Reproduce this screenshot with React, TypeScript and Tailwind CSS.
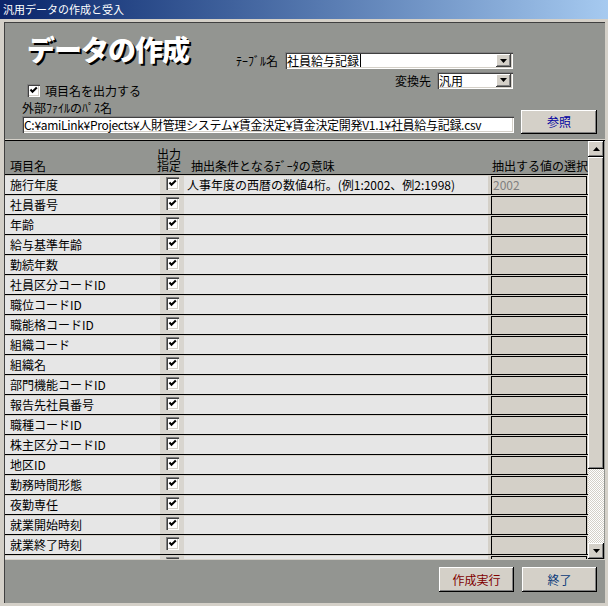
import React from 'react';

const rows = [
  '施行年度',
  '社員番号',
  '年齢',
  '給与基準年齢',
  '勤続年数',
  '社員区分コードID',
  '職位コードID',
  '職能格コードID',
  '組織コード',
  '組織名',
  '部門機能コードID',
  '報告先社員番号',
  '職種コードID',
  '株主区分コードID',
  '地区ID',
  '勤務時間形態',
  '夜勤専任',
  '就業開始時刻',
  '就業終了時刻',
  '',
];

function Check() {
  return (
    <span className="relative block h-[13px] w-[13px] bg-white shadow-[inset_1px_1px_0_#808080,inset_2px_2px_0_#404040,inset_-1px_-1px_0_#fff,inset_-2px_-2px_0_#d4d0c8]">
      <svg className="absolute inset-0" width="13" height="13" viewBox="0 0 13 13">
        <polyline points="3.5,5.5 5.5,7.8 9.8,3.5" fill="none" stroke="#000" strokeWidth="2" />
      </svg>
    </span>
  );
}

function Arrow({ up }: { up?: boolean }) {
  return (
    <svg width="7" height="4" viewBox="0 0 7 4">
      <polygon points={up ? '3.5,0 7,4 0,4' : '0,0 7,0 3.5,4'} fill="#000" />
    </svg>
  );
}

function Combo({ width, value, caret }: { width: string; value: string; caret?: boolean }) {
  return (
    <div
      className={
        width +
        ' flex h-[17px] items-center bg-white pl-[2px] pr-[2px] shadow-[inset_1px_1px_0_#808080,inset_2px_2px_0_#404040,inset_-1px_-1px_0_#fff,inset_-2px_-2px_0_#d4d0c8]'
      }
    >
      <span className="flex flex-1 items-center text-[12px] leading-[13px]">
        {value}
        {caret && <span className="ml-[1px] inline-block h-[13px] w-[1px] bg-black" />}
      </span>
      <span className="flex h-[13px] w-[15px] items-center justify-center bg-[#d4d0c8] shadow-[inset_-1px_-1px_0_#404040,inset_1px_1px_0_#fff,inset_-2px_-2px_0_#808080]">
        <Arrow />
      </span>
    </div>
  );
}

function Button({ label, color }: { label: string; color: string }) {
  return (
    <button
      className={
        color +
        ' flex h-full w-full items-center justify-center bg-[#d4d0c8] text-[12px] shadow-[inset_-1px_-1px_0_#000,inset_1px_1px_0_#fff,inset_-2px_-2px_0_#808080]'
      }
    >
      {label}
    </button>
  );
}

export default function App() {
  return (
    <div className="flex h-[606px] w-[608px] flex-col bg-[#d4d0c8] font-['Noto_Sans_CJK_JP',sans-serif] text-black">
      {/* title bar */}
      <div className="flex h-[19px] items-center bg-gradient-to-r from-[#0a246a] to-[#a6caf0] pl-[3px] text-[11px] text-white">
        汎用データの作成と受入
      </div>

      <div className="flex flex-1 flex-col pb-[3px] pl-[4px] pr-[3px] pt-[3px]">
        <div className="flex flex-1 flex-col border-l border-t border-[#404040] bg-[#939591]">
          {/* form header */}
          <div className="flex h-[116px] flex-col">
            <div className="flex">
              <div className="flex w-[231px] flex-col pl-[22px] pt-[10px]">
                <div className="h-[32px] text-[28px] font-black leading-[32px] tracking-[-1px] text-white [text-shadow:2px_2px_0_#000]">
                  データの作成
                </div>
                <label className="mt-[19px] flex h-[13px] items-center gap-[5px] text-[12px]">
                  <Check />
                  <span className="leading-[13px]">項目名を出力する</span>
                </label>
              </div>
              <div className="flex w-[277px] flex-col pt-[29px]">
                <div className="flex h-[17px] items-center">
                  <span className="w-[49px] text-[12px] leading-[13px]">ﾃｰﾌﾞﾙ名</span>
                  <Combo width="w-[228px]" value="社員給与記録" caret />
                </div>
                <div className="mt-[2px] flex h-[18px] items-center justify-end">
                  <span className="mr-[6px] text-[12px] leading-[13px]">変換先</span>
                  <Combo width="w-[76px]" value="汎用" />
                </div>
              </div>
            </div>
            <div className="mt-[4px] flex items-start">
              <div className="ml-[17px] flex flex-col">
                <span className="h-[14px] text-[12px] leading-[14px]">外部ﾌｧｲﾙのﾊﾟｽ名</span>
                <div className="mt-[1px] flex h-[17px] w-[492px] items-center bg-white pl-[2px] text-[12px] leading-[13px] tracking-[-0.3px] shadow-[inset_1px_1px_0_#808080,inset_2px_2px_0_#404040,inset_-1px_-1px_0_#fff,inset_-2px_-2px_0_#d4d0c8]">
                  C:¥amiLink¥Projects¥人財管理システム¥賃金決定¥賃金決定開発V1.1¥社員給与記録.csv
                </div>
              </div>
              <div className="ml-[7px] mt-[9px] h-[24px] w-[76px]">
                <Button label="参照" color="text-[#0000a0]" />
              </div>
            </div>
          </div>

          {/* separator */}
          <div className="h-[1px] bg-[#d4d0c8]" />
          <div className="h-[1px] bg-black" />

          {/* detail section */}
          <div className="flex h-[418px]">
            <div className="flex w-[583px] flex-col">
              <div className="flex h-[34px] items-end whitespace-nowrap border-b border-black pb-[2px] text-[12px] leading-[13px]">
                <span className="w-[152px] pl-[5px]">項目名</span>
                <span className="w-[32px] leading-[12px]">
                  出力
                  <br />
                  指定
                </span>
                <span className="w-[303px] pl-[2px]">抽出条件となるﾃﾞｰﾀの意味</span>
                <span>抽出する値の選択</span>
              </div>
              <div className="h-[384px] overflow-hidden">
                {rows.map((name, i) => (
                  <div
                    key={i}
                    className="flex h-[20px] border-b border-t border-b-black border-t-[#d4d0c8] text-[12px] leading-[18px]"
                  >
                    <div className="w-[155px] bg-[#e6e6e6] pl-[5px]">{name}</div>
                    <div className="flex w-[24px] justify-center bg-[#d8d5cf] pt-[1px]">
                      <Check />
                    </div>
                    <div className="w-[304px] bg-[#e6e6e6] pl-[3px]">
                      {i === 0 ? '人事年度の西暦の数値4桁。(例1:2002、例2:1998)' : ''}
                    </div>
                    <div className="flex w-[100px] bg-[#d4d0c8] pl-[3px] pr-[1px]">
                      <div className="flex-1 border-l border-r border-t border-black bg-[#d4d0c8] pl-[1px] leading-[16px] text-[#808080]">
                        {i === 0 ? '2002' : ''}
                      </div>
                    </div>
                  </div>
                ))}
              </div>
            </div>

            {/* scrollbar */}
            <div className="flex w-[16px] flex-col bg-[repeating-conic-gradient(#d4d0c8_0_25%,#ffffff_0_50%)] bg-[length:2px_2px]">
              <div className="flex h-[16px] items-center justify-center bg-[#d4d0c8] shadow-[inset_-1px_-1px_0_#000,inset_1px_1px_0_#fff,inset_-2px_-2px_0_#808080]">
                <Arrow up />
              </div>
              <div className="h-[312px] bg-[#d4d0c8] shadow-[inset_-1px_-1px_0_#000,inset_1px_1px_0_#fff,inset_-2px_-2px_0_#808080]" />
              <div className="flex-1" />
              <div className="flex h-[16px] items-center justify-center bg-[#d4d0c8] shadow-[inset_-1px_-1px_0_#000,inset_1px_1px_0_#fff,inset_-2px_-2px_0_#808080]">
                <Arrow />
              </div>
            </div>
          </div>

          {/* footer */}
          <div className="flex flex-1 items-start justify-end gap-[8px] border-t border-[#d4d0c8] pr-[8px] pt-[7px]">
            <div className="h-[25px] w-[75px]">
              <Button label="作成実行" color="text-[#800000]" />
            </div>
            <div className="h-[25px] w-[75px]">
              <Button label="終了" color="text-[#0a3a7a]" />
            </div>
          </div>
        </div>
      </div>
    </div>
  );
}
